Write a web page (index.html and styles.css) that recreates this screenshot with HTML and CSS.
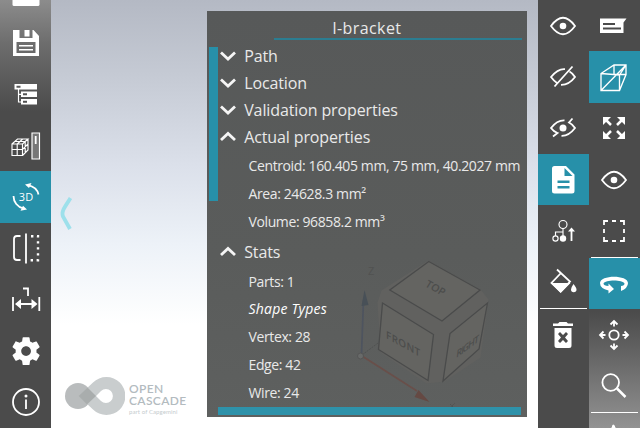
FILE: index.html
```
<!DOCTYPE html>
<html lang="en">
<head>
<meta charset="utf-8">
<title>CAD viewer</title>
<link rel="stylesheet" href="styles.css">
</head>
<body>
<div class="app">
  <nav class="bar bar-left">
    <div class="cell"><svg class="icon" viewBox="0 0 32 32"><path class="solid" d="M2.500 24h27v4.400q0 1.600-1.600 1.600H4.100Q2.500 30 2.500 28.400z"/></svg></div>
    <div class="cell"><svg class="icon" viewBox="0 0 32 32"><path class="solid" fill-rule="evenodd" d="M3 3h20.500l5.500 6v20H3zM9.500 3v8h13V3h-3v6.500h-5V3zM6.500 15v11h19V15zM9 18h14v1.600H9zM9 22h14v1.600H9z"/></svg></div>
    <div class="cell"><svg class="icon" viewBox="0 0 32 32"><path class="solid" fill-rule="evenodd" d="M4.500 6H27v5.500H4.500zM6.500 7.700v2h4v-2zM11 13.500h16V19H11zM13 15.300v2h4v-2zM11 21h16v5.500H11zM13 22.800v2h4v-2z"/><path class="line thin" d="M8.500 11v13H11M8.500 16.300H11"/></svg></div>
    <div class="cell"><svg class="icon" viewBox="0 0 32 32"><path class="line thin" d="M2 14h10.500v11.500H2zM2 14l5.500-5H18l-5.500 5M18 9v11l-5.500 5.500M2 19.500h10.500l5.500-5.500M7.200 25.500V14l5.500-5M4.700 11.500h10.500V23"/><path class="solid bar-dim" d="M22 3h7.500v26H22z"/><path class="line thin" d="M22 3h7.500v26H22z"/><path class="line" d="M25.700 6v8"/></svg></div>
    <div class="cell active"><svg class="icon" viewBox="0 0 32 32"><path class="line" d="M3.500 15c0 6 4 11 10 12.500M28.500 13.500C27.500 9 24 5.500 18 4.200"/><path class="solid" d="M15 3.500l6.500-1.500-2.500 5zM17 28.500l-6.500 1.300 2.500-5z"/><text class="tiny" x="16" y="20">3D</text></svg></div>
    <div class="cell"><svg class="icon" viewBox="0 0 32 32"><path class="line" d="M10.500 4H7Q4 4 4 7v18q0 3 3 3h3.500"/><path class="line" d="M16 1.500v30"/><path class="line dots" d="M21 4.200h7v24h-8"/></svg></div>
    <div class="cell"><svg class="icon" viewBox="0 0 32 32"><path class="line" d="M3 13v14M29.300 13v14M6 20h20M13 4.500h5V12"/><path class="solid" d="M5 20l6-5v10zM27.500 20l-6-5v10z"/></svg></div>
    <div class="cell"><svg class="icon" viewBox="0 0 32 32"><g transform="translate(-.6 -.6) scale(1.390)"><path class="solid" d="M19.430 12.980c.04-.32.07-.64.07-.98s-.03-.66-.07-.98l2.110-1.650c.19-.15.24-.42.12-.64l-2-3.460c-.12-.22-.39-.3-.61-.22l-2.490 1c-.52-.4-1.080-.73-1.690-.98l-.38-2.650C14.460 2.180 14.250 2 14 2h-4c-.25 0-.46.18-.49.42l-.38 2.650c-.61.25-1.170.59-1.690.98l-2.490-1c-.23-.09-.49 0-.61.22l-2 3.460c-.13.22-.07.49.12.64l2.110 1.650c-.04.32-.07.65-.07.980s.03.66.07.98l-2.110 1.650c-.19.15-.24.42-.12.64l2 3.460c.12.22.39.3.61.22l2.490-1c.52.4 1.080.73 1.690.98l.38 2.650c.03.24.24.42.49.42h4c.25 0 .46-.18.49-.42l.38-2.650c.61-.25 1.170-.59 1.690-.98l2.490 1c.23.09.49 0 .61-.22l2-3.460c.12-.22.07-.49-.12-.64l-2.110-1.650zM12 15.500c-1.930 0-3.500-1.570-3.500-3.500s1.570-3.500 3.500-3.500 3.500 1.570 3.500 3.500-1.570 3.500-3.500 3.500z"/></g></svg></div>
    <div class="cell"><svg class="icon" viewBox="0 0 32 32"><circle class="line" cx="16" cy="16" r="13"/><path class="line" d="M16 13.500V23"/><circle class="solid" cx="16" cy="10" r="1.500"/></svg></div>
  </nav>

  <main class="canvas">
    <svg class="collapse" viewBox="0 0 14 36"><path d="M12.500 2C7 11 3 15 5 20.500L12 33"/></svg>
    <div class="logo">
      <svg class="logo-mark" viewBox="0 0 60 40"><circle cx="13" cy="20" r="13" fill="#b9bcbd"/><path fill="#c9cdce" fill-rule="evenodd" d="M13.500 20L28 6.500a19 19 0 1 1 0 27zM31 20l5 5a7 7 0 1 0 0-10z"/><path fill="#a9adad" d="M13.500 20l9-8.500L31 20l-9 8.500z"/></svg>
      <div class="logo-text"><div>OPEN</div><div>CASCADE</div><small>part of Capgemini</small></div>
    </div>

    <section class="panel">
      <svg class="cube" viewBox="345 250 160 160">
        <path fill="#61615f" d="M428.500 260.500l52 29 8 10-8 58-36 24-18 2-46-31-3-50 4-12z"/>
        <g class="face"><path d="M428.800 265.500L480 294l-38 31-52.200-31z" transform="translate(0 -4)"/><path d="M382.500 303l51 31.500-5.500 46-49.500-31z"/><path d="M487.500 303l-8.500 46-36 32 7-47.500z"/></g>
        <text transform="matrix(.85 .47 -.5 .8 424.500 286)">TOP</text>
        <text textLength="38" transform="matrix(.9 .5 0 .95 386 338)">FRONT</text>
        <text textLength="28" transform="matrix(.8 -.58 -.12 .95 456 358)">RIGHT</text>
        <text class="axis" x="368" y="275">Z</text>
        <path class="dash" d="M362 355l16-12"/>
        <path d="M361.500 354l2-54" stroke="#4e545f" stroke-width="1.700"/><path fill="#485057" d="M364.500 290l4 15-7 1z"/>
        <path d="M362 356l55 35" stroke="#694f4a" stroke-width="1.700"/><path fill="#654943" d="M429.500 402l-15-5 4-7z"/>
        <circle cx="360.500" cy="356" r="3" fill="#686a69" stroke="#555"/>
        <path class="dash" d="M448 410l7-7M450 404l3 3"/>
      </svg>
      <h1 class="title">l-bracket</h1>
      <div class="rule"></div>
      <div class="body">
        <div class="vscroll"></div>
        <div class="tree">
          <div class="group"><svg class="chev" viewBox="0 0 18 12"><path d="M2 2.500l7 6.500 7-6.500"/></svg>Path</div>
          <div class="group"><svg class="chev" viewBox="0 0 18 12"><path d="M2 2.500l7 6.500 7-6.500"/></svg>Location</div>
          <div class="group"><svg class="chev" viewBox="0 0 18 12"><path d="M2 2.500l7 6.500 7-6.500"/></svg>Validation properties</div>
          <div class="group"><svg class="chev" viewBox="0 0 18 12"><path d="M2 9l7-6.500L16 9"/></svg>Actual properties</div>
          <div class="item first">Centroid: 160.405 mm, 75 mm, 40.2027 mm</div>
          <div class="item">Area: 24628.3 mm²</div>
          <div class="item">Volume: 96858.2 mm³</div>
          <div class="group stats"><svg class="chev" viewBox="0 0 18 12"><path d="M2 9l7-6.500L16 9"/></svg>Stats</div>
          <div class="item first">Parts: 1</div>
          <div class="item sub">Shape Types</div>
          <div class="item">Vertex: 28</div>
          <div class="item">Edge: 42</div>
          <div class="item">Wire: 24</div>
        </div>
      </div>
      <div class="hscroll"></div>
    </section>
  </main>

  <nav class="bar bar-inner">
    <div class="cell"><svg class="icon" viewBox="0 0 32 32"><path class="line" d="M4 16Q16-.5 28 16Q16 32.500 4 16z"/><circle class="solid" cx="16" cy="16" r="3.300"/></svg></div>
    <div class="cell"><svg class="icon" viewBox="0 0 32 32"><path class="line" d="M10 22Q7 20 4 16Q11 7.500 18 8.200M22.500 10.500Q26 12.500 28 16Q22 24 14 23.800M7.500 25.500L25.500 5.500"/></svg></div>
    <div class="cell"><svg class="icon" viewBox="0 0 32 32"><path class="line" d="M6 24.500L10.500 21Q6.500 19.500 4 16Q10 8 17.500 8.300M25.500 6.500L22 10.500Q26 12.500 28 16Q22 24 14.500 23.800"/><circle class="solid" cx="16" cy="16" r="3.500"/></svg></div>
    <div class="cell active"><svg class="icon" viewBox="0 0 32 32"><path class="solid" fill-rule="evenodd" d="M7.500 2H19l8.500 8.500V27q0 2.500-2.500 2.500H7.500Q5 29.500 5 27V4.500Q5 2 7.500 2zM17.500 4v8h8zM10.500 16.500v2.400h12v-2.400zM10.500 22v2.400h12V22z"/></svg></div>
    <div class="cell"><svg class="icon" viewBox="0 0 32 32"><g class="line thin"><circle cx="16" cy="9.500" r="4"/><path d="M16 13.500V22M8.500 21v-4H16"/><circle cx="8.500" cy="23.500" r="2.600"/></g><circle class="solid" cx="16" cy="23.500" r="3.200"/><path class="line" d="M24.500 26V14"/><path class="solid" d="M21 16.500l3.500-4 3.500 4z"/></svg></div>
    <div class="cell"><svg class="icon" viewBox="0 0 32 32"><path class="line" d="M10 3.500L23 15.500L13.500 25.500L4.500 17L14 7"/><path class="solid" d="M4 17h19.500L13.700 27zM26.500 18q3 3.500 3 5.500a2.700 2.700 0 0 1-5.500 0q0-2 2.500-5.500z"/></svg></div>
    <div class="sep"></div>
    <div class="cell"><svg class="icon" viewBox="0 0 32 32"><path class="solid" fill-rule="evenodd" d="M6 4.500h5l1.500-1.500h7L21 4.500h5V7H6zM7.500 9h17v17.500q0 2.500-2.500 2.500H10q-2.500 0-2.500-2.500zM13 13l-2 2 3 3.500-3 3.500 2 2 3-3 3 3 2-2-3-3.500 3-3.500-2-2-3 3z"/></svg></div>
  </nav>

  <nav class="bar bar-outer">
    <div class="cell"><svg class="icon" viewBox="0 0 32 32"><path class="solid" fill-rule="evenodd" d="M2 8.500h26.500L25.500 12.500v10.500H2zM5 13v2h12v-2zM5 17.500v2h18v-2z"/></svg></div>
    <div class="cell active"><svg class="icon" viewBox="0 0 32 32"><path class="line cubewire" d="M3 12.500L16 4h12v9.500L21.500 29.500H3zM3 12.500L21.500 14l6.500-10M21.500 14v15.500M3 29.500L28 4M16 4v9.500H28"/></svg></div>
    <div class="cell"><svg class="icon" viewBox="0 0 32 32"><path class="solid" d="M5 5h8l-8 8zM27 5v8l-8-8zM5 27v-8l8 8zM27 27h-8l8-8z"/><path class="line fat" d="M7.500 7.500l5.500 5.500M24.500 7.500L19 13M7.500 24.500L13 19M24.500 24.500L19 19"/></svg></div>
    <div class="cell"><svg class="icon" viewBox="0 0 32 32"><path class="line" d="M4 16Q16-.5 28 16Q16 32.500 4 16z"/><circle class="solid" cx="16" cy="16" r="3.300"/></svg></div>
    <div class="cell"><svg class="icon" viewBox="0 0 32 32"><path class="line" d="M6 10V6h4M14 6h4M22 6h4v4M26 14v4M26 22v4h-4M18 26h-4M10 26H6v-4M6 18v-4"/></svg></div>
    <div class="sep"></div>
    <div class="cell active"><svg class="icon" viewBox="0 0 32 32"><path class="solid" d="M2 15C2 6.500 30 6.500 30 15q0 5-7 8v-5q3.500-.5 3.500-2.500C25 11.500 7 11.500 5.500 15.500q0 2 5 2.500v-2.500l5.500 5.500-5.500 4.500v-3Q2 20.500 2 15z"/></svg></div>
    <div class="cell"><svg class="icon" viewBox="0 0 32 32"><circle class="line" cx="16" cy="16" r="4.700"/><path class="line" d="M16 2.500v5M12.500 5.500L16 2l3.500 3.500M16 29.500v-5M12.500 26.500L16 30l3.500-3.500M2.500 16h5M5.500 12.500L2 16l3.500 3.500M29.500 16h-5M26.500 12.500L30 16l-3.500 3.500"/></svg></div>
    <div class="cell"><svg class="icon" viewBox="0 0 32 32"><circle class="line" cx="12.700" cy="12.500" r="8.300"/><path class="line fat" d="M19 18.500l8.500 8.500"/></svg></div>
    <div class="sep"></div>
    <div class="cell"><svg class="icon" viewBox="0 0 32 32"><path class="solid" d="M14 8V3q1-3 3 0V8zM12.500 5.500l3-3 3 3z"/></svg></div>
  </nav>
</div>
</body>
</html>
```
FILE: styles.css
```
* { box-sizing: border-box; }

body {
  margin: 0;
  overflow: hidden;
  font-family: "Open Sans", "Noto Sans", sans-serif;
}

.app {
  display: grid;
  grid-template-columns: 51px 487px 51px 51px;
  width: 640px;
  height: 428px;
  overflow: hidden;
}

.bar {
  display: flex;
  flex-direction: column;
  height: 428px;
  overflow: hidden;
  background: #4b4b4b;
}

.bar-left { background: linear-gradient(#8c8c8c 0, #6c6c6c 45px, #4b4b4b 112px); }
.bar-left .cell:first-child { margin-top: -34px; }
.bar-outer { background: linear-gradient(#4b4b4b 312px, #686868 360px, #929292 428px); }

.cell {
  flex: none;
  display: flex;
  align-items: center;
  justify-content: center;
  height: 51.350px;
}

.active { background: #2790a9; }
.sep { flex: none; height: 1.200px; margin: 0 2px; background: #fff; }
.icon { width: 32px; height: 32px; overflow: visible; }
.bar-inner .icon, .bar-outer .icon { margin-right: 1px; }
.solid { fill: #fff; }
.solid.bar-dim { fill: #777; }
.line { fill: none; stroke: #fff; stroke-width: 1.800; }
.thin { stroke-width: 1.150; }
.cubewire { stroke-width: 1.350; }
.fat { stroke-width: 2.500; }
.dots { stroke-width: 2.400; stroke-dasharray: 2.400 3.600; }
.tiny { font-size: 11px; fill: #fff; text-anchor: middle; }

.canvas {
  position: relative;
  height: 428px;
  padding: 11px 11px 0 156px;
  background: linear-gradient(#b4b9c4 0, #c5cad4 75px, #dbe0ea 165px, #edf2f8 245px, #fff 325px);
}

.collapse {
  position: absolute;
  left: 7px;
  top: 196px;
  width: 14px;
  height: 36px;
}
.collapse path { fill: none; stroke: #9de0eb; stroke-width: 3.800; }

.logo {
  position: absolute;
  left: 14px;
  top: 376px;
  display: flex;
  gap: 4px;
}
.logo-mark { width: 60px; height: 40px; }
.logo-text {
  padding-top: 7px;
  font: 600 12px/12px Lato, sans-serif;
  letter-spacing: .35px;
  color: #b3bbbf;
}
.logo-text small {
  display: block;
  padding-top: 1px;
  font: 6px/8px Lato, sans-serif;
  letter-spacing: .1px;
  color: #c5cbce;
}

.panel {
  position: relative;
  display: flex;
  flex-direction: column;
  width: 320px;
  height: 406px;
  background: linear-gradient(#575959, #5a5c5b 60%, #5e605f);
  color: #e9e9e9;
}

.title {
  margin: 5px 0 0;
  height: 22px;
  font-size: 16px;
  font-weight: 400;
  line-height: 24px;
  letter-spacing: .4px;
  text-align: center;
}
.rule { height: 1.500px; margin: 0 5px 0 67px; background: #2b7d91; }

.body { display: flex; height: 367px; padding: 7.500px 0 0 2px; }
.vscroll { flex: none; width: 8.500px; height: 154px; background: #2790a9; }
.tree { margin-left: 1px; margin-top: -4px; }

.group {
  display: flex;
  align-items: center;
  height: 26.800px;
  padding-left: .7px;
  font-size: 16px;
  letter-spacing: -.12px;
  white-space: nowrap;
}
.chev { width: 18px; height: 12px; margin-right: 7px; }
.chev path { fill: none; stroke: #f5f5f5; stroke-width: 2.800; }

.item {
  height: 27.850px;
  margin-left: 30px;
  font-size: 14px;
  line-height: 27.850px;
  letter-spacing: -.38px;
  white-space: nowrap;
}
.first { margin-top: 2px; }
.sub { color: #fff; letter-spacing: .2px; font-style: italic; }
.stats { margin-top: 3px; }

.hscroll { height: 8px; margin: 0 6px 0 11px; background: #2e92aa; }

.cube { position: absolute; left: 138px; top: 239px; width: 160px; height: 160px; }
.face path { fill: #646461; stroke: #4a4b4b; stroke-width: 1.300; }
.cube text { font: 600 11px "Open Sans", sans-serif; fill: #4c4d4c; }
.cube .axis { font-weight: 400; font-size: 11px; fill: #515251; }
.dash { stroke: #505251; stroke-dasharray: 2 1; fill: none; }
.title, .rule, .body, .hscroll { position: relative; }
```
